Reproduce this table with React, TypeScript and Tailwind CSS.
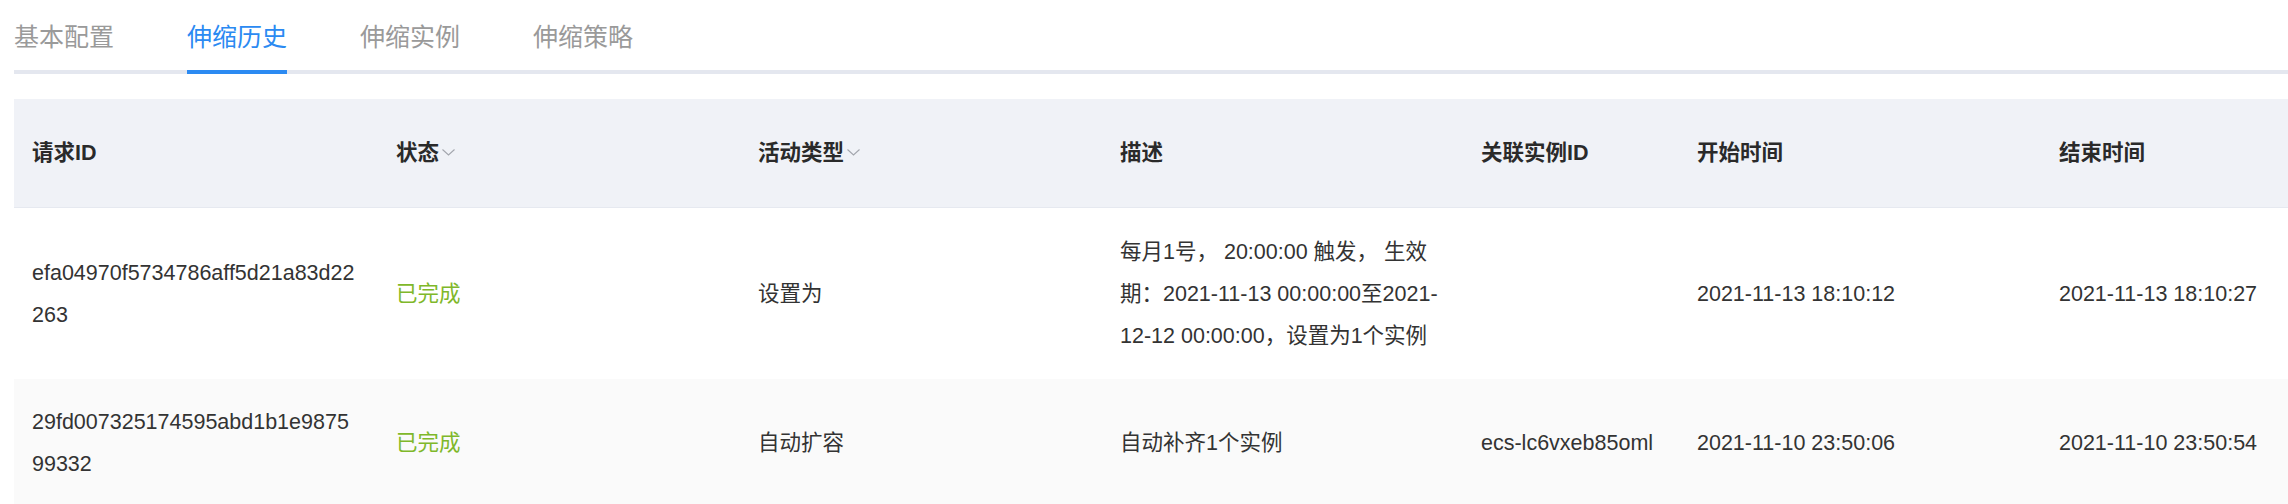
import React from "react";

const font = { fontFamily: '"Liberation Sans", "Noto Sans CJK SC", sans-serif' };

function Caret() {
  return (
    <svg width="13" height="7" viewBox="0 0 13 7" className="ml-[3px] mt-[-2px]" fill="none">
      <path d="M0.5 0.5 L6.5 6 L12.5 0.5" stroke="#a3a6ad" strokeWidth="1.1" />
    </svg>
  );
}

const cols = "grid grid-cols-[364px_362px_362px_361px_216px_362px_1fr]";

type Row = {
  id: string[];
  status: string;
  type: string;
  desc: string[];
  inst: string;
  start: string;
  end: string;
  bg: string;
};

const rows: Row[] = [
  {
    id: ["efa04970f5734786aff5d21a83d22", "263"],
    status: "已完成",
    type: "设置为",
    desc: ["每月1号， 20:00:00 触发， 生效", "期：2021-11-13 00:00:00至2021-", "12-12 00:00:00，设置为1个实例"],
    inst: "",
    start: "2021-11-13 18:10:12",
    end: "2021-11-13 18:10:27",
    bg: "bg-white h-[171px]",
  },
  {
    id: ["29fd007325174595abd1b1e9875", "99332"],
    status: "已完成",
    type: "自动扩容",
    desc: ["自动补齐1个实例"],
    inst: "ecs-lc6vxeb85oml",
    start: "2021-11-10 23:50:06",
    end: "2021-11-10 23:50:54",
    bg: "bg-[#fafafa] h-[128px]",
  },
];

function Lines({ lines }: { lines: string[] }) {
  return (
    <div>
      {lines.map((l, i) => (
        <div key={i} className="whitespace-pre">
          {l}
        </div>
      ))}
    </div>
  );
}

export default function App() {
  const tabs = ["基本配置", "伸缩历史", "伸缩实例", "伸缩策略"];
  return (
    <div className="w-[2288px] h-[504px] overflow-hidden bg-white" style={font}>
      <div className="ml-[14px] flex gap-[73px] border-b-[4px] border-[#e4e7ef]">
        {tabs.map((t, i) => (
          <div
            key={t}
            className={
              "pt-[17px] pb-[17px] text-[25px] leading-[36px] mb-[-4px] border-b-[4px] " +
              (i === 1 ? "text-[#2b8af2] border-[#2b8af2]" : "text-[#9a9a9a] border-transparent")
            }
            style={{ fontFamily: '"Noto Sans CJK SC", sans-serif' }}
          >
            {t}
          </div>
        ))}
      </div>

      <div className="ml-[14px] mt-[25px] text-[21.5px] leading-[42px] text-[#333]">
        <div className={cols + " bg-[#f0f2f7] border-b border-[#e6e9f0] h-[109px] items-center font-bold text-[#2a2a2a]"}>
          <div className="px-[18px]">请求ID</div>
          <div className="px-[18px] flex items-center">
            状态
            <Caret />
          </div>
          <div className="px-[18px] flex items-center">
            活动类型
            <Caret />
          </div>
          <div className="px-[18px]">描述</div>
          <div className="px-[18px]">关联实例ID</div>
          <div className="px-[18px]">开始时间</div>
          <div className="px-[18px]">结束时间</div>
        </div>
        {rows.map((r, i) => (
          <div key={i} className={cols + " items-center " + r.bg}>
            <div className="px-[18px]">
              <Lines lines={r.id} />
            </div>
            <div className="px-[18px] text-[#7fb82a]">{r.status}</div>
            <div className="px-[18px]">{r.type}</div>
            <div className="px-[18px]">
              <Lines lines={r.desc} />
            </div>
            <div className="px-[18px] whitespace-nowrap">{r.inst}</div>
            <div className="px-[18px] whitespace-nowrap">{r.start}</div>
            <div className="px-[18px] whitespace-nowrap">{r.end}</div>
          </div>
        ))}
      </div>
    </div>
  );
}
